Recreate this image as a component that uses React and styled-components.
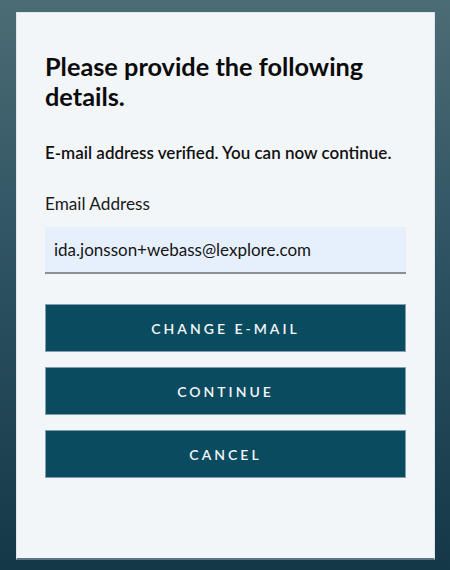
import styled, { createGlobalStyle } from "styled-components";

const GlobalStyle = createGlobalStyle`
  html, body {
    margin: 0;
    padding: 0;
    height: 100%;
  }
  body {
    font-family: "Lato", "Noto Sans", sans-serif;
    background: linear-gradient(180deg, #4c6c75 0%, #2b5060 50%, #143848 100%);
    min-height: 570px;
  }
`;

const Page = styled.div`
  padding: 12px 15px 10px 16px;
  box-sizing: border-box;
  height: 570px;
`;

const Card = styled.div`
  background: #f3f6f9;
  border: 1px solid #dfe6ea;
  border-bottom: 2px solid #5d7580;
  height: 100%;
  box-sizing: border-box;
  padding: 38px 28px 0 28px;
  display: flex;
  flex-direction: column;
`;

const Title = styled.h1`
  margin: 0;
  font-size: 25.3px;
  line-height: 30px;
  font-weight: 700;
  color: #0b0b0b;
  padding-right: 30px;
`;

const Notice = styled.p`
  margin: 30px 0 0 0;
  font-size: 17px;
  line-height: 24px;
  font-weight: 600;
  color: #111;
`;

const Label = styled.label`
  display: block;
  margin-top: 27px;
  font-size: 17.2px;
  line-height: 24px;
  color: #1a1a1a;
`;

const Input = styled.input`
  margin-top: 11px;
  width: 100%;
  box-sizing: border-box;
  height: 47px;
  border: none;
  border-bottom: 2px solid #8c8f93;
  background: #e6f0fd;
  padding: 0 9px;
  font-family: inherit;
  font-size: 17px;
  color: #151515;
  outline: none;
`;

const Actions = styled.div`
  margin-top: 30px;
  display: flex;
  flex-direction: column;
  gap: 15px;
`;

const Button = styled.button`
  height: 48px;
  width: 100%;
  background: #0b4b60;
  border: 1px solid #7f9fb0;
  color: #f4f7f9;
  font-family: inherit;
  font-size: 14px;
  font-weight: 600;
  letter-spacing: 3px;
  text-transform: uppercase;
  cursor: pointer;
`;

export default function App() {
  return (
    <>
      <GlobalStyle />
      <Page>
        <Card>
          <Title>Please provide the following details.</Title>
          <Notice>E-mail address verified. You can now continue.</Notice>
          <Label htmlFor="email">Email Address</Label>
          <Input id="email" type="email" defaultValue="ida.jonsson+webass@lexplore.com" />
          <Actions>
            <Button>Change e-mail</Button>
            <Button>Continue</Button>
            <Button>Cancel</Button>
          </Actions>
        </Card>
      </Page>
    </>
  );
}
